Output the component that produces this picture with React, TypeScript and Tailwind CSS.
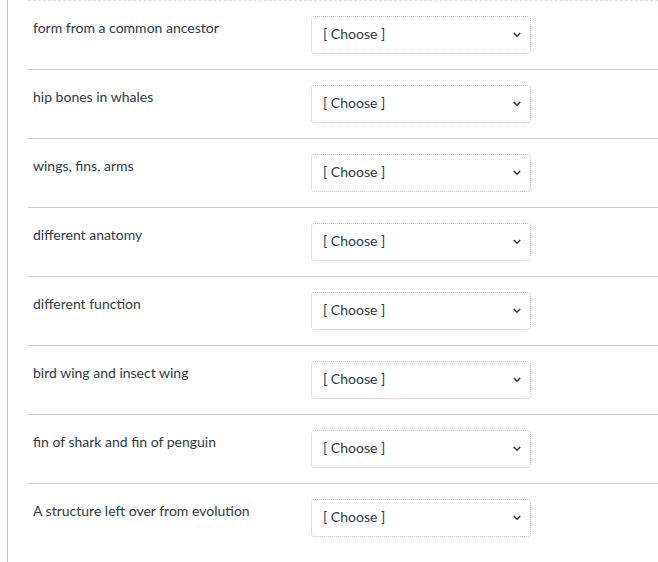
import React from 'react';

const items = [
  'form from a common ancestor',
  'hip bones in whales',
  'wings, fins, arms',
  'different anatomy',
  'different function',
  'bird wing and insect wing',
  'fin of shark and fin of penguin',
  'A structure left over from evolution',
];

const Chevron = () => (
  <svg width="10" height="8" viewBox="0 0 10 8" className="mr-[8px] mt-[2px]">
    <path d="M1.8 2 L5 5.2 L8.2 2" fill="none" stroke="#2d3b45" strokeWidth="1.6" />
  </svg>
);

export default function App() {
  return (
    <div
      className="w-[658px] h-[562px] bg-white overflow-hidden text-[#2d3b45]"
      style={{ fontFamily: 'Lato, "Open Sans", sans-serif' }}
    >
      <div className="ml-[7px] h-full border-l border-[#b9bfc3] pl-[20px]">
        {items.map((label, i) => (
          <div
            key={label}
            className={
              i === 0
                ? 'flex h-[69px] border-t border-dashed border-[#cfe6cf]'
                : 'flex h-[69px] border-t border-[#c7cdd1]'
            }
          >
            <div className="w-[283px] pl-[5px] pt-[17px] text-[14px] leading-[20px]">{label}</div>
            <div className="mt-[15px] flex h-[38px] w-[220px] items-center justify-between rounded-[4px] border border-dotted border-[#c4bcc9] pb-[3px] pl-[11px] text-[14px]">
              <span>[ Choose ]</span>
              <Chevron />
            </div>
          </div>
        ))}
      </div>
    </div>
  );
}
